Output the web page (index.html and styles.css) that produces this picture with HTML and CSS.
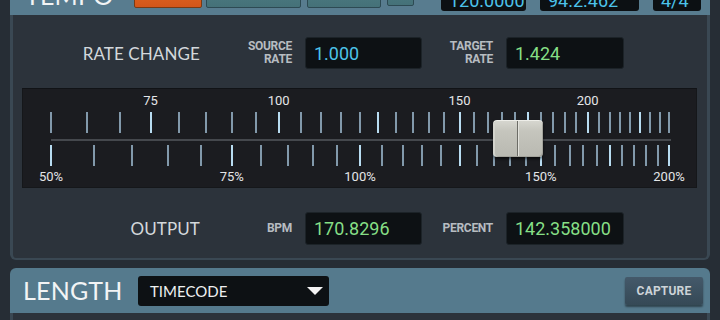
FILE: index.html
```html
<!DOCTYPE html>
<html lang="en">
<head>
    <meta charset="UTF-8">
    <meta name="viewport" content="width=device-width, initial-scale=1.0">
    <title>Tempo / Rate Change</title>
    <link rel="stylesheet" href="styles.css">
</head>
<body>
    <div class="deck">
        <!-- Tempo module -->
        <section class="module">
            <header class="module-head tempo-head">
                <h2 class="module-title">TEMPO</h2>
                <div class="mode-btns">
                    <button class="mode-btn active"></button>
                    <button class="mode-btn w94"></button>
                    <button class="mode-btn w74"></button>
                    <button class="mode-btn small"></button>
                </div>
                <div class="head-readouts">
                    <div class="head-readout w85">120.0000</div>
                    <div class="head-readout w99">94.2.462</div>
                    <div class="head-readout w48">4/4</div>
                </div>
            </header>

            <div class="module-body tempo-body">
                <div class="field-row rate-row">
                    <div class="row-title">RATE CHANGE</div>
                    <div class="field-label">SOURCE<br>RATE</div>
                    <div class="readout cyan">1.000</div>
                    <div class="field-label">TARGET<br>RATE</div>
                    <div class="readout green">1.424</div>
                </div>

                <!-- Rate slider -->
                <div class="rate-slider" id="rateSlider">
                    <div class="slider-line"></div>
                    <div class="slider-thumb" id="sliderThumb"></div>
                </div>

                <div class="field-row output-row">
                    <div class="row-title">OUTPUT</div>
                    <div class="field-label">BPM</div>
                    <div class="readout green">170.8296</div>
                    <div class="field-label">PERCENT</div>
                    <div class="readout green">142.358000</div>
                </div>
            </div>
        </section>

        <!-- Length module -->
        <section class="module length">
            <header class="module-head length-head">
                <h2 class="module-title">LENGTH</h2>
                <div class="dropdown">
                    <span>TIMECODE</span>
                    <span class="caret"></span>
                </div>
                <button class="capture-btn">CAPTURE</button>
            </header>
            <div class="module-body length-body"></div>
        </section>
    </div>

    <script>
        // log scale: 50% .. 200% of source rate
        const slider = document.getElementById('rateSlider');
        const thumb = document.getElementById('sliderThumb');
        const sourceBpm = 120;
        const x0 = 28;
        const span = 618;
        const pos = rate => x0 + span * Math.log(rate / 0.5) / Math.log(4);

        function addTick(cls, rate, major) {
            const t = document.createElement('div');
            t.className = 'tick ' + cls + (major ? ' major' : '');
            t.style.left = pos(rate).toFixed(1) + 'px';
            slider.insertBefore(t, thumb);
        }

        function addLabel(cls, rate, text) {
            const l = document.createElement('div');
            l.className = 'scale-label ' + cls;
            l.style.left = pos(rate).toFixed(1) + 'px';
            l.textContent = text;
            slider.insertBefore(l, thumb);
        }

        for (let bpm = 60; bpm <= 240; bpm += 5) {
            addTick('up', bpm / sourceBpm, bpm % 25 === 0);
        }
        for (let pct = 50; pct <= 200; pct += 5) {
            addTick('down', pct / 100, pct % 25 === 0);
        }
        [75, 100, 150, 200].forEach(bpm => addLabel('up', bpm / sourceBpm, bpm));
        [50, 75, 100, 150, 200].forEach(pct => addLabel('down', pct / 100, pct + '%'));

        thumb.style.left = pos(1.424).toFixed(1) + 'px';
    </script>
</body>
</html>
```

FILE: styles.css
```css
* {
    margin: 0;
    padding: 0;
    box-sizing: border-box;
}

body {
    background: #262d35;
    width: 720px;
    height: 320px;
    overflow: hidden;
    font-family: Roboto, 'Liberation Sans', sans-serif;
    color: #d6dbdf;
}

.deck {
    margin-left: 10px;
    width: 700px;
}

/* Module headers */
.module-head {
    display: flex;
    background: #587c8f;
}

.module-title {
    font-family: Lato, 'DejaVu Sans', sans-serif;
    font-weight: 400;
    font-size: 25px;
    line-height: 1;
    color: #f2f4f5;
    letter-spacing: 0.2px;
}

.tempo-head {
    height: 46px;
    margin-top: -31px;
    align-items: flex-end;
    padding: 0 9px 7px 15px;
}

.tempo-head .module-title {
    width: 109px;
}

.mode-btns {
    display: flex;
    align-items: flex-end;
}

.mode-btn {
    height: 30px;
    border: 1px solid #2d4a53;
    border-radius: 2px;
    background: linear-gradient(#4f8087, #457178);
    margin-right: 6px;
}

.mode-btn.active {
    width: 68px;
    margin-right: 4px;
    border-color: #7a3a14;
    background: linear-gradient(#e66c22, #d4561a);
}

.mode-btn.w94 { width: 95px; }
.mode-btn.w74 { width: 74px; }

.mode-btn.small {
    width: 27px;
    margin-bottom: 2px;
}

.head-readouts {
    display: flex;
    margin-left: auto;
    gap: 14px;
}

.head-readout {
    height: 30px;
    display: flex;
    align-items: flex-end;
    padding-left: 8px;
    background: #0c1013;
    border-radius: 3px;
    color: #4cc3ea;
    font-size: 18px;
    line-height: 20px;
    margin-bottom: -3px;
}

.head-readout.w85 { width: 85px; }
.head-readout.w99 { width: 99px; }
.head-readout.w48 { width: 48px; }

/* Module body */
.module-body {
    background: #2c333b;
    border: 3px solid #3a4853;
    border-top: none;
}

.tempo-body {
    padding: 22px 0 13px;
    border-bottom-width: 2px;
    border-radius: 0 0 6px 6px;
}

.field-row {
    display: grid;
    grid-template-columns: 187px 79px 117px 58px 118px;
    column-gap: 13px;
    align-items: center;
}

.rate-row .readout {
    height: 32px;
}

.output-row {
    margin-top: 24px;
}

.output-row .readout {
    height: 33px;
}

.row-title {
    text-align: right;
    font-family: Lato, 'DejaVu Sans', sans-serif;
    font-size: 17px;
    color: #d3d8dc;
    letter-spacing: 0.1px;
}

.field-label {
    text-align: right;
    font-size: 12px;
    font-weight: bold;
    line-height: 13px;
    color: #b7bcc1;
    letter-spacing: -0.3px;
}

.readout {
    display: flex;
    align-items: center;
    padding-left: 8px;
    background: #0d1114;
    border: 1px solid #1c2328;
    border-radius: 3px;
    font-size: 18px;
}

.cyan { color: #4cc3ea; }
.green { color: #86df86; }

/* Rate slider */
.rate-slider {
    position: relative;
    margin: 19px 0 0 9px;
    width: 675px;
    height: 100px;
    background: #1b1c20;
    border: 1px solid #15171a;
    border-top-color: #111316;
}

.slider-line {
    position: absolute;
    left: 28px;
    width: 620px;
    top: 50px;
    height: 2px;
    background: #45484d;
}

.tick {
    position: absolute;
    width: 2px;
    height: 21px;
    margin-left: -1px;
    background: #8299ab;
}

.tick.major {
    background: #b8dcf1;
}

.tick.up { top: 23px; }
.tick.down { top: 56px; }

.scale-label {
    position: absolute;
    transform: translateX(-50%);
    font-size: 13px;
    line-height: 14px;
    color: #e4e6e8;
}

.scale-label.up { top: 5px; }
.scale-label.down { top: 81px; }

.slider-thumb {
    position: absolute;
    top: 31px;
    width: 50px;
    height: 37px;
    margin-left: -25px;
    border-radius: 4px;
    background:
        linear-gradient(90deg, transparent 24px, #6c6c66 24px, #6c6c66 25px, #e2e2dc 25px, #e2e2dc 26px, transparent 26px),
        linear-gradient(#d8d8d1, #c5c5bd 30%, #b9b9b1);
    box-shadow: inset 0 1px 0 #eeeee9, inset 2px 0 0 #d3d3cc, inset -1px -1px 0 #a3a39b, 0 2px 3px rgba(0, 0, 0, 0.6);
}

/* Length module */
.length {
    margin-top: 8px;
}

.length-head {
    height: 45px;
    align-items: center;
    padding: 0 7px 0 13px;
    border-radius: 6px 6px 0 0;
    background: #557a8d;
}

.length-head .module-title {
    width: 115px;
}

.dropdown {
    display: flex;
    align-items: center;
    justify-content: space-between;
    width: 191px;
    height: 30px;
    padding: 0 6px 0 12px;
    background: #0d1114;
    border-radius: 3px;
    font-family: Lato, 'DejaVu Sans', sans-serif;
    font-size: 15px;
    color: #eef0f1;
}

.caret {
    width: 0;
    height: 0;
    border-left: 8px solid transparent;
    border-right: 8px solid transparent;
    border-top: 8px solid #f4f4f4;
}

.capture-btn {
    margin-left: auto;
    width: 78px;
    height: 28px;
    border: none;
    border-radius: 2px;
    background: linear-gradient(#44596a, #354956);
    box-shadow: 0 2px 2px rgba(0, 0, 0, 0.45);
    font-family: Roboto, 'Liberation Sans', sans-serif;
    font-size: 12px;
    font-weight: bold;
    color: #cdd3d8;
    letter-spacing: 0.2px;
}

.length-body {
    height: 20px;
}
```
